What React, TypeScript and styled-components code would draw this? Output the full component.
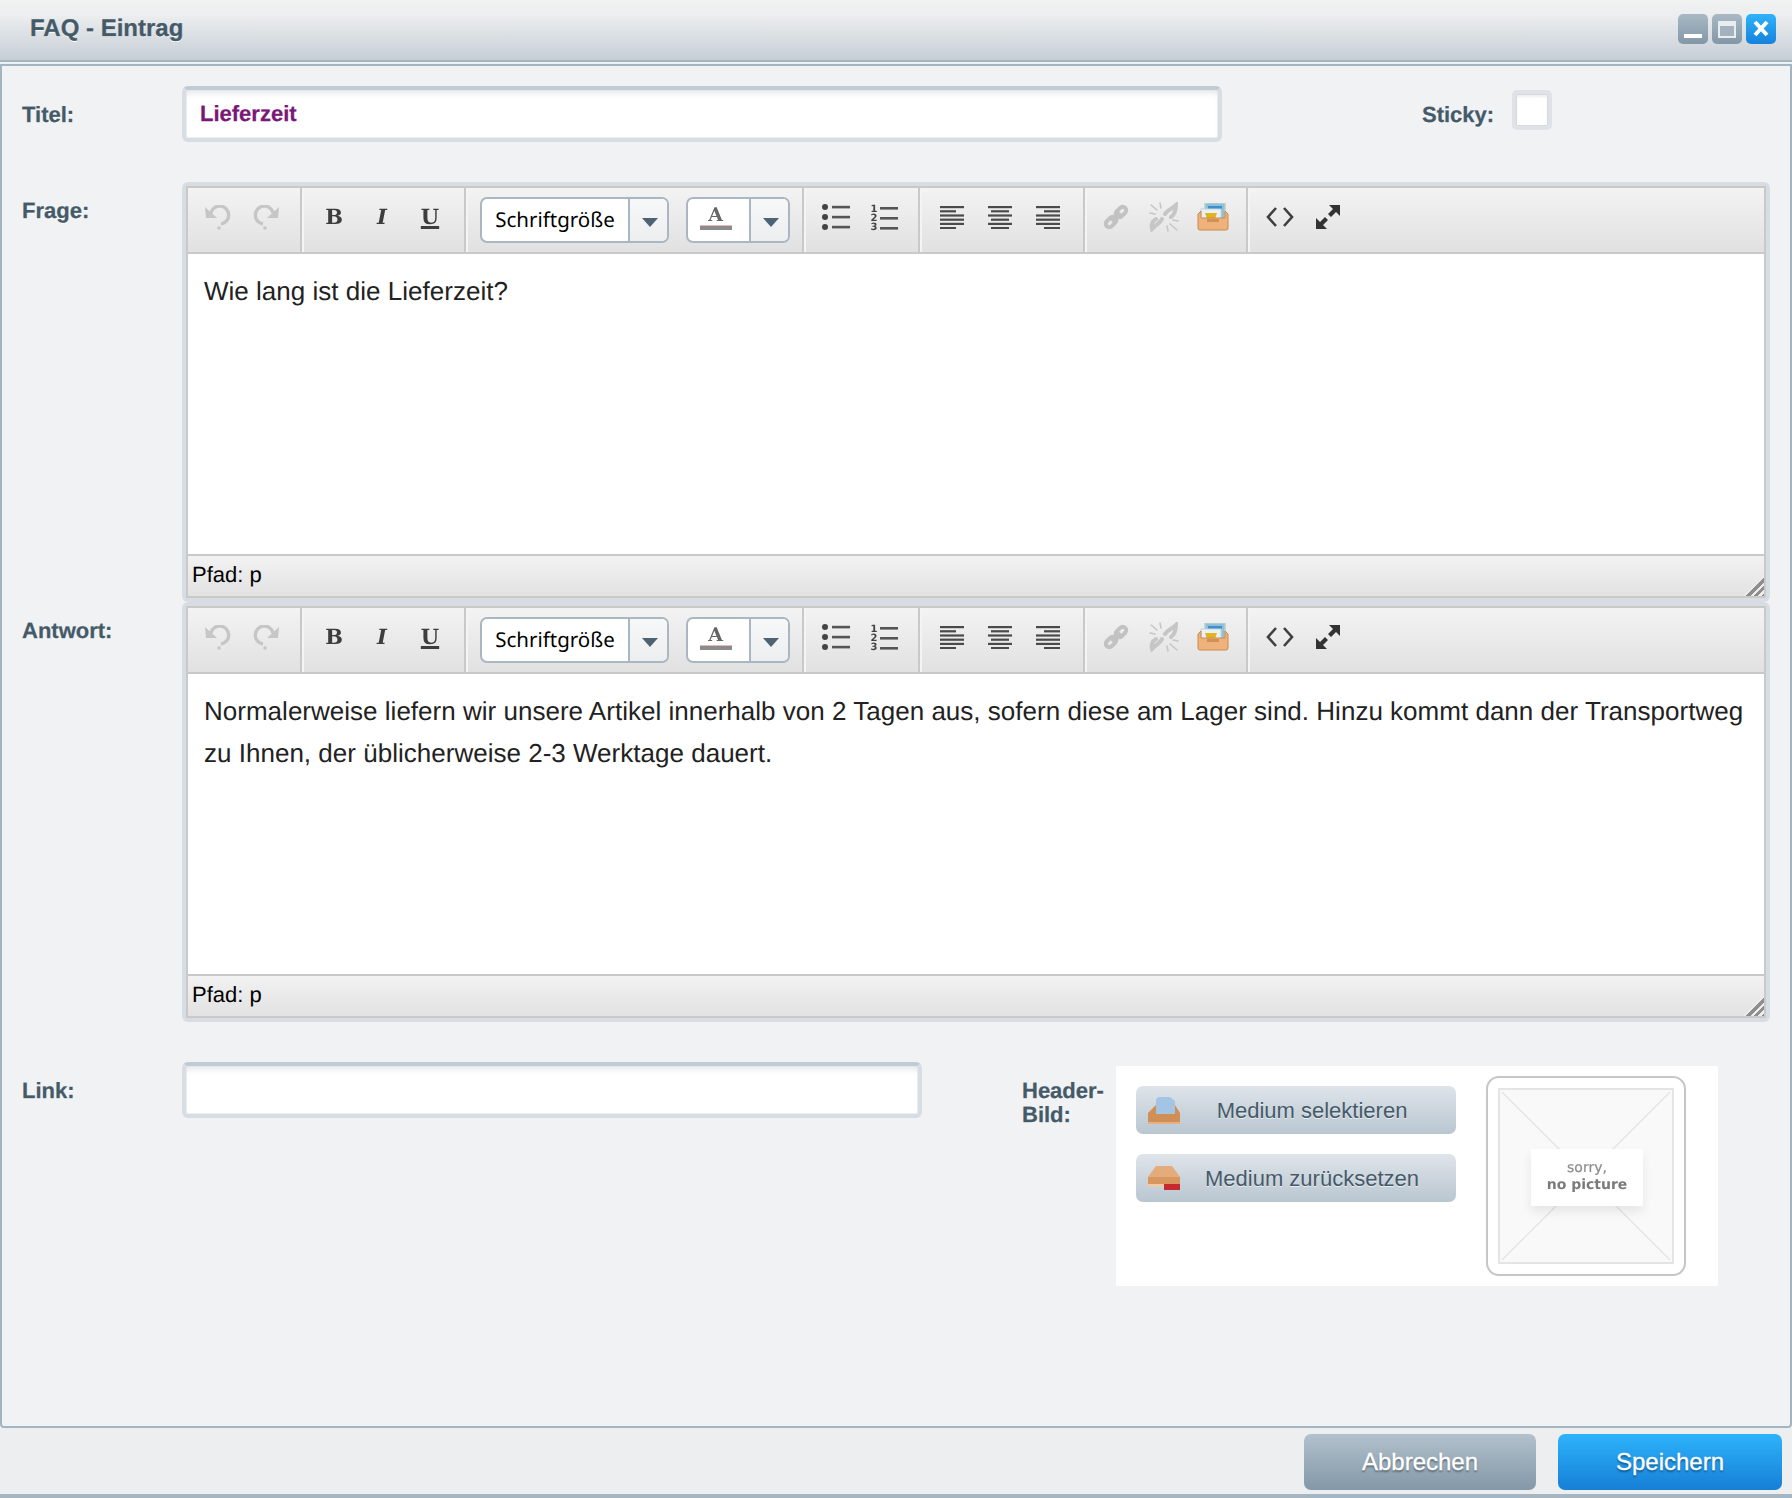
import React from "react";
import styled, { createGlobalStyle } from "styled-components";

const GlobalStyle = createGlobalStyle`
  html, body {
    margin: 0;
    padding: 0;
    background: #f0f2f4;
  }
  * {
    box-sizing: border-box;
  }
  body {
    font-family: "Liberation Sans", Arial, sans-serif;
    text-rendering: geometricPrecision;
  }
`;

const Window = styled.div`
  width: 1792px;
  height: 1498px;
  display: flex;
  flex-direction: column;
  overflow: hidden;
  background: #eef0f2;
`;

const TitleBar = styled.header`
  height: 62px;
  flex: none;
  display: flex;
  align-items: flex-start;
  justify-content: space-between;
  padding: 14px 16px 0 30px;
  border-bottom: 2px solid #a3b5c3;
  background: linear-gradient(#f1f2f2 0, #eceeef 25%, #c6ced5 100%);
`;

const WindowTitle = styled.h1`
  margin: 1px 0 0;
  font-size: 24px;
  line-height: 28px;
  font-weight: bold;
  color: #455a69;
  -webkit-text-stroke: 0.3px #455a69;
  text-shadow: 0 1px 0 #fff;
`;

const WindowButtons = styled.div`
  display: flex;
  gap: 4px;
`;

const WindowButton = styled.button<{ $primary?: boolean }>`
  width: 30px;
  height: 30px;
  padding: 0;
  border: 0;
  border-radius: 5px;
  display: flex;
  align-items: center;
  justify-content: center;
  background: ${(p) =>
    p.$primary
      ? "linear-gradient(#2fb2fa, #1583dc)"
      : "linear-gradient(#a9b8c4, #8298a8)"};
`;

const Panel = styled.main`
  flex: 1;
  margin-top: 2px;
  padding: 20px 0 0 20px;
  display: flex;
  flex-direction: column;
  background: #f0f2f4;
  border: 2px solid #a3b5c3;
  border-radius: 0 0 4px 4px;
`;

const Row = styled.div<{ $gap?: number }>`
  display: flex;
  align-items: flex-start;
  margin-bottom: ${(p) => p.$gap ?? 0}px;
`;

const Label = styled.label`
  flex: none;
  width: 160px;
  padding-top: 17px;
  font-size: 22px;
  line-height: 24px;
  font-weight: bold;
  color: #455a69;
  -webkit-text-stroke: 0.25px #455a69;
  text-shadow: 0 1px 0 #fff;
`;

const TextInput = styled.div<{ $width: number }>`
  flex: none;
  width: ${(p) => p.$width}px;
  height: 56px;
  padding-left: 14px;
  display: flex;
  align-items: center;
  font-size: 22px;
  font-weight: bold;
  color: #7a1877;
  -webkit-text-stroke: 0.25px #7a1877;
  background: #fff;
  border: 4px solid #d8dde3;
  border-top-color: #c2cbd2;
  border-radius: 6px;
  box-shadow: inset 0 5px 6px -2px #e4e6e8, inset 0 0 0 1px #eceff1;
`;

const StickyLabel = styled(Label)`
  width: auto;
  margin-left: 200px;
`;

const HeaderImageLabel = styled(Label)`
  width: 94px;
  margin-left: 100px;
`;

const Checkbox = styled.div`
  width: 40px;
  height: 40px;
  margin: 4px 0 0 18px;
  background: #fff;
  border: 4px solid #dfe3e7;
  border-radius: 5px;
  box-shadow: inset 0 0 0 1px #d6dade, inset 0 3px 3px #eee;
`;

const EditorFrame = styled.section`
  width: 1588px;
  height: 420px;
  flex: none;
  padding: 4px;
  display: flex;
  flex-direction: column;
  background: #d8dde4;
  border-radius: 6px;
`;

const EditorInner = styled.div`
  flex: 1;
  display: flex;
  flex-direction: column;
  border: 2px solid #c9c9c9;
  background: #fff;
`;

const Toolbar = styled.div`
  height: 66px;
  flex: none;
  display: flex;
  border-bottom: 2px solid #c9c9c9;
  background: linear-gradient(#f3f3f3, #e1e1e1);
`;

const ToolGroup = styled.div<{ $left?: number; $right?: number; $gap?: number }>`
  display: flex;
  align-items: center;
  gap: ${(p) => p.$gap ?? 0}px;
  padding: 0 ${(p) => p.$right ?? 11}px 0 ${(p) => p.$left ?? 5}px;
  border-right: 2px solid #c9c9c9;
  box-shadow: 2px 0 0 #f4f4f4;
  margin-right: 2px;

  &:last-child {
    border-right: 0;
    box-shadow: none;
  }
`;

const ToolButton = styled.span<{ $muted?: boolean; $shift?: number }>`
  width: 48px;
  height: 48px;
  margin-bottom: 6px;
  padding-left: ${(p) => p.$shift ?? 0}px;
  display: flex;
  align-items: center;
  justify-content: center;
  filter: blur(0.45px);
  color: ${(p) => (p.$muted ? "#c6c6c6" : "#3d3d3d")};
`;

const SerifGlyph = styled.span<{ $italic?: boolean; $underline?: boolean }>`
  font-family: "DejaVu Serif", "Liberation Serif", serif;
  font-size: 21px;
  line-height: 24px;
  font-weight: bold;
  font-style: ${(p) => (p.$italic ? "italic" : "normal")};
  text-decoration: ${(p) => (p.$underline ? "underline" : "none")};
  text-decoration-thickness: 2.5px;
  text-underline-offset: 2px;
`;

const Combo = styled.div<{ $width: number }>`
  width: ${(p) => p.$width}px;
  height: 46px;
  flex: none;
  display: flex;
  background: #fff;
  border: 2px solid #aab6c1;
  border-radius: 7px;
`;

const ComboValue = styled.div`
  flex: 1;
  display: flex;
  align-items: center;
  justify-content: center;
  font-family: "Noto Sans", "Open Sans", sans-serif;
  font-size: 20.5px;
  color: #000;
`;

const ComboArrow = styled.div`
  width: 39px;
  flex: none;
  padding-left: 2px;
  display: flex;
  align-items: center;
  justify-content: center;
  border-left: 2px solid #aab6c1;
  border-radius: 0 5px 5px 0;
  background: linear-gradient(#f7f8f8, #eceef0);
`;

const ArrowDown = styled.span`
  width: 0;
  height: 0;
  margin-top: 4px;
  border-left: 8px solid transparent;
  border-right: 8px solid transparent;
  border-top: 9px solid #4d6373;
`;

const ColorGlyph = styled.div`
  margin: 0 6px 4px 0;
  display: flex;
  flex-direction: column;
  align-items: center;
  font-family: "DejaVu Serif", "Liberation Serif", serif;
  font-size: 19px;
  line-height: 19px;
  font-weight: bold;
  color: #666;
  filter: blur(0.3px);
`;

const ColorBar = styled.span`
  width: 32px;
  height: 4px;
  margin-top: 1px;
  background: #8b8b8b;
  box-shadow: 0 -1px 0 #e4b8bc;
`;

const EditorBody = styled.div`
  flex: 1;
  padding: 16px 16px 0;
  font-size: 26px;
  line-height: 42px;
  letter-spacing: 0.015px;
  color: #222;
  background: #fff;
`;

const StatusBar = styled.div`
  height: 42px;
  flex: none;
  position: relative;
  padding: 0 0 2px 4px;
  display: flex;
  align-items: center;
  font-size: 22px;
  color: #000;
  border-top: 2px solid #c9c9c9;
  background: linear-gradient(#f2f2f2, #e2e2e2);
`;

const ResizeHandle = styled.span`
  position: absolute;
  right: 0;
  bottom: 0;
  width: 21px;
  height: 21px;
  background: repeating-linear-gradient(
    135deg,
    #8e8e8e 0 3px,
    #ececec 3px 5.6px
  );
  clip-path: polygon(100% 0, 100% 100%, 0 100%);
`;

const MediaBox = styled.div`
  width: 602px;
  height: 220px;
  flex: none;
  margin-top: 4px;
  padding: 10px 32px 0 20px;
  display: flex;
  justify-content: space-between;
  background: #fff;
`;

const MediaButtons = styled.div`
  width: 320px;
  padding-top: 10px;
  display: flex;
  flex-direction: column;
  gap: 20px;
`;

const MediaButton = styled.button`
  width: 320px;
  height: 48px;
  padding: 1px 12px 0 12px;
  display: flex;
  align-items: center;
  border: 0;
  border-radius: 7px;
  font-family: inherit;
  font-size: 22px;
  color: #455a69;
  text-shadow: 0 1px 0 #e8edf1;
  background: linear-gradient(#dfe4ea, #b9c6d0);
`;

const MediaButtonText = styled.span`
  flex: 1;
  text-align: center;
`;

const NoPicture = styled.div`
  width: 200px;
  height: 200px;
  flex: none;
  padding: 10px;
  background: #fff;
  border: 2px solid #c6c6c6;
  border-radius: 13px;
`;

const NoPictureInner = styled.div`
  position: relative;
  width: 176px;
  height: 176px;
  display: flex;
  align-items: center;
  justify-content: center;
  background: #f9f9f9;
  border: 2px solid #e4e4e4;
`;

const Diagonals = styled.svg`
  position: absolute;
  inset: 0;
  width: 100%;
  height: 100%;
`;

const NoPictureTag = styled.div`
  position: relative;
  width: 112px;
  height: 57px;
  margin: 2px 0 0 2px;
  padding-top: 11px;
  text-align: center;
  font-family: "DejaVu Sans", "Noto Sans", sans-serif;
  font-size: 14px;
  line-height: 17px;
  color: #8c8c8c;
  -webkit-text-stroke: 0.2px #8c8c8c;
  background: #fff;
  box-shadow: 0 6px 10px rgba(0, 0, 0, 0.08);
  filter: blur(0.25px);
`;

const NoPictureStrong = styled.div`
  font-weight: bold;
  color: #7a7a7a;
  -webkit-text-stroke: 0;
`;

const Footer = styled.footer`
  height: 70px;
  flex: none;
  padding: 6px 10px 0 0;
  display: flex;
  justify-content: flex-end;
  gap: 22px;
  background: #eceef0;
  border-bottom: 4px solid #a5b5c2;
`;

const FooterButton = styled.button<{ $primary?: boolean }>`
  width: ${(p) => (p.$primary ? 224 : 232)}px;
  height: 56px;
  border: 0;
  border-radius: 7px;
  font-family: inherit;
  font-size: 24px;
  color: #fff;
  -webkit-text-stroke: 0.3px #fff;
  text-shadow: 0 2px 2px rgba(0, 0, 0, 0.4);
  background: ${(p) =>
    p.$primary
      ? "linear-gradient(#2db3fb, #167fd6)"
      : "linear-gradient(#b2c1cc, #8398a8)"};
`;

const UndoSvg = styled.svg<{ $flip?: boolean }>`
  transform: ${(p) => (p.$flip ? "scaleX(-1)" : "none")};
`;

const Undo = ({ flip }: { flip?: boolean }) => (
  <UndoSvg $flip={flip} width="26" height="25" viewBox="0 0 26 25">
    <path
      d="M6 8A9 9 0 1 1 16 19"
      fill="none"
      stroke="currentColor"
      strokeWidth="3.4"
    />
    <path d="M0 2L1 13L12 13Z" fill="currentColor" />
    <circle cx="14" cy="23" r="1.8" fill="currentColor" />
  </UndoSvg>
);

const BulletList = () => (
  <svg width="30" height="26" viewBox="0 0 30 26">
    {[3, 13, 23].map((y) => (
      <g key={y}>
        <circle cx="4" cy={y} r="3" fill="#444" />
        <rect x="11" y={y - 1.2} width="18" height="2.6" fill="#555" />
      </g>
    ))}
  </svg>
);

const NumberList = () => (
  <svg width="30" height="28" viewBox="0 0 30 28">
    {["1", "2", "3"].map((n, i) => (
      <g key={n}>
        <text
          x="5"
          y={9 + i * 9}
          textAnchor="middle"
          fontFamily="DejaVu Sans"
          fontSize="10"
          fontWeight="bold"
          fill="#444"
        >
          {n}
        </text>
        <rect x="11" y={4 + i * 10} width="18" height="2.6" fill="#555" />
      </g>
    ))}
  </svg>
);

const Align = ({ mode }: { mode: "left" | "center" | "right" }) => {
  const widths = [24, 16, 24, 24, 24, 16];
  return (
    <svg width="24" height="24" viewBox="0 0 24 24">
      {widths.map((w, i) => {
        const short = mode === "center" ? (i % 2 === 1 ? 18 : 24) : w;
        const x =
          mode === "left" ? 0 : mode === "right" ? 24 - short : (24 - short) / 2;
        return (
          <rect key={i} x={x} y={1 + i * 4.2} width={short} height="2.2" fill="#4a4a4a" />
        );
      })}
    </svg>
  );
};

const LinkIcon = () => (
  <svg width="26" height="26" viewBox="0 0 26 26">
    <g
      transform="rotate(-45 13 13)"
      fill="none"
      stroke="#c2c2c2"
      strokeWidth="4"
      strokeLinejoin="round"
    >
      <rect x="0" y="9.5" width="12" height="7" rx="3.5" />
      <rect x="14" y="9.5" width="12" height="7" rx="3.5" />
      <path d="M7 13H19" />
    </g>
  </svg>
);

const UnlinkIcon = () => (
  <svg width="30" height="30" viewBox="0 0 30 30">
    <g fill="none" stroke="#c6c6c6" strokeLinecap="round">
      <path
        strokeWidth="4"
        d="M16 12C18 8 23 7 27 3C27 8 26 12 22 15M13 17C11 21 7 23 3 27C2 24 3 19 7 17"
      />
      <path
        strokeWidth="1.6"
        d="M2 3L8 8M11 1L12 6M1 11L6 12M21 22L28 28M24 18L29 19M18 24L19 29"
      />
    </g>
  </svg>
);

const MediaIcon = () => (
  <svg width="32" height="28" viewBox="0 0 32 28">
    <rect x="8" y="0" width="20" height="16" fill="#8fc0da" stroke="#b8cfc9" strokeWidth="1.5" />
    <rect x="11" y="3" width="14" height="3" fill="#3f8fd0" />
    <rect x="4" y="6" width="20" height="12" fill="#e8f2f6" stroke="#c5d4d6" />
    <path d="M8 10H20L18 16H10Z" fill="#e2b51c" />
    <path
      d="M1 11L4 8V15H28V8L31 11V25Q31 27 29 27H3Q1 27 1 25Z"
      fill="#eeb27a"
      stroke="#c98a50"
      strokeWidth="1"
    />
    <rect x="10" y="16" width="12" height="3" fill="#d19055" />
  </svg>
);

const CodeIcon = () => (
  <svg width="28" height="22" viewBox="0 0 28 22">
    <path
      d="M10 2L2 11L10 20M18 2L26 11L18 20"
      fill="none"
      stroke="#3f3f3f"
      strokeWidth="2.6"
    />
  </svg>
);

const FullscreenIcon = () => (
  <svg width="26" height="26" viewBox="0 0 26 26">
    <path
      d="M14 1H25V12L21 8L16 13L13 10L18 5ZM12 25H1V14L5 18L10 13L13 16L8 21Z"
      fill="#333"
    />
  </svg>
);

const TrayIcon = () => (
  <svg width="32" height="27" viewBox="0 0 32 27">
    <path d="M8 4Q8 0 12 0H22L27 4V18H8Z" fill="#a3c4e2" />
    <path d="M0 16L8 8V17H27V8L32 16V27H0Z" fill="#d08f55" />
    <rect x="0" y="25" width="32" height="2" fill="#e5b084" />
  </svg>
);

const TrayRemoveIcon = () => (
  <svg width="32" height="25" viewBox="0 0 32 25">
    <path d="M8 0H24L32 11V21H0V11Z" fill="#e6ab7b" />
    <path d="M3 11H32V18H0V11Z" fill="#d8975e" />
    <rect x="0" y="18" width="32" height="3" fill="#efcaa9" />
    <rect x="16" y="18" width="16" height="6" fill="#c62a2f" />
  </svg>
);

const Editor = ({ text }: { text: string }) => (
  <EditorFrame>
    <EditorInner>
      <Toolbar>
        <ToolGroup $left={6} $right={10}>
          <ToolButton $muted>
            <Undo />
          </ToolButton>
          <ToolButton $muted>
            <Undo flip />
          </ToolButton>
        </ToolGroup>
        <ToolGroup $left={6} $right={10}>
          <ToolButton>
            <SerifGlyph>B</SerifGlyph>
          </ToolButton>
          <ToolButton>
            <SerifGlyph $italic>I</SerifGlyph>
          </ToolButton>
          <ToolButton>
            <SerifGlyph $underline>U</SerifGlyph>
          </ToolButton>
        </ToolGroup>
        <ToolGroup $left={12} $right={12} $gap={17}>
          <Combo $width={189}>
            <ComboValue>Schriftgröße</ComboValue>
            <ComboArrow>
              <ArrowDown />
            </ComboArrow>
          </Combo>
          <Combo $width={104}>
            <ComboValue>
              <ColorGlyph>
                <span>A</span>
                <ColorBar />
              </ColorGlyph>
            </ComboValue>
            <ComboArrow>
              <ArrowDown />
            </ComboArrow>
          </Combo>
        </ToolGroup>
        <ToolGroup $left={6} $right={10}>
          <ToolButton>
            <BulletList />
          </ToolButton>
          <ToolButton>
            <NumberList />
          </ToolButton>
        </ToolGroup>
        <ToolGroup $left={6}>
          <ToolButton>
            <Align mode="left" />
          </ToolButton>
          <ToolButton>
            <Align mode="center" />
          </ToolButton>
          <ToolButton>
            <Align mode="right" />
          </ToolButton>
        </ToolGroup>
        <ToolGroup $left={4}>
          <ToolButton $shift={1}>
            <LinkIcon />
          </ToolButton>
          <ToolButton $shift={1}>
            <UnlinkIcon />
          </ToolButton>
          <ToolButton $shift={4}>
            <MediaIcon />
          </ToolButton>
        </ToolGroup>
        <ToolGroup $left={6}>
          <ToolButton>
            <CodeIcon />
          </ToolButton>
          <ToolButton>
            <FullscreenIcon />
          </ToolButton>
        </ToolGroup>
      </Toolbar>
      <EditorBody>{text}</EditorBody>
      <StatusBar>
        Pfad: p
        <ResizeHandle />
      </StatusBar>
    </EditorInner>
  </EditorFrame>
);

export default function App() {
  return (
    <Window>
      <GlobalStyle />
      <TitleBar>
        <WindowTitle>FAQ - Eintrag</WindowTitle>
        <WindowButtons>
          <WindowButton aria-label="Minimieren">
            <svg width="20" height="20" viewBox="0 0 20 20">
              <rect x="1" y="15" width="18" height="4" fill="#fff" />
            </svg>
          </WindowButton>
          <WindowButton aria-label="Maximieren">
            <svg width="20" height="20" viewBox="0 0 20 20">
              <rect x="2" y="3" width="16" height="15" fill="#a3b2be" stroke="#e9edf0" strokeWidth="2" />
              <rect x="2" y="3" width="16" height="4" fill="#e9edf0" />
            </svg>
          </WindowButton>
          <WindowButton $primary aria-label="Schließen">
            <svg width="20" height="20" viewBox="0 0 20 20">
              <path d="M4 3L16 16M16 3L4 16" stroke="#fff" strokeWidth="4" />
            </svg>
          </WindowButton>
        </WindowButtons>
      </TitleBar>
      <Panel>
        <Row $gap={40}>
          <Label>Titel:</Label>
          <TextInput $width={1040}>Lieferzeit</TextInput>
          <StickyLabel>Sticky:</StickyLabel>
          <Checkbox />
        </Row>
        <Row>
          <Label>Frage:</Label>
          <Editor text="Wie lang ist die Lieferzeit?" />
        </Row>
        <Row $gap={40}>
          <Label>Antwort:</Label>
          <Editor text="Normalerweise liefern wir unsere Artikel innerhalb von 2 Tagen aus, sofern diese am Lager sind. Hinzu kommt dann der Transportweg zu Ihnen, der üblicherweise 2-3 Werktage dauert." />
        </Row>
        <Row>
          <Label>Link:</Label>
          <TextInput $width={740} />
          <HeaderImageLabel>Header-Bild:</HeaderImageLabel>
          <MediaBox>
            <MediaButtons>
              <MediaButton>
                <TrayIcon />
                <MediaButtonText>Medium selektieren</MediaButtonText>
              </MediaButton>
              <MediaButton>
                <TrayRemoveIcon />
                <MediaButtonText>Medium zurücksetzen</MediaButtonText>
              </MediaButton>
            </MediaButtons>
            <NoPicture>
              <NoPictureInner>
                <Diagonals viewBox="0 0 172 172">
                  <path d="M2 2L170 170M170 2L2 170" stroke="#e6e6e6" strokeWidth="1.5" />
                </Diagonals>
                <NoPictureTag>
                  sorry,
                  <NoPictureStrong>no picture</NoPictureStrong>
                </NoPictureTag>
              </NoPictureInner>
            </NoPicture>
          </MediaBox>
        </Row>
      </Panel>
      <Footer>
        <FooterButton>Abbrechen</FooterButton>
        <FooterButton $primary>Speichern</FooterButton>
      </Footer>
    </Window>
  );
}
